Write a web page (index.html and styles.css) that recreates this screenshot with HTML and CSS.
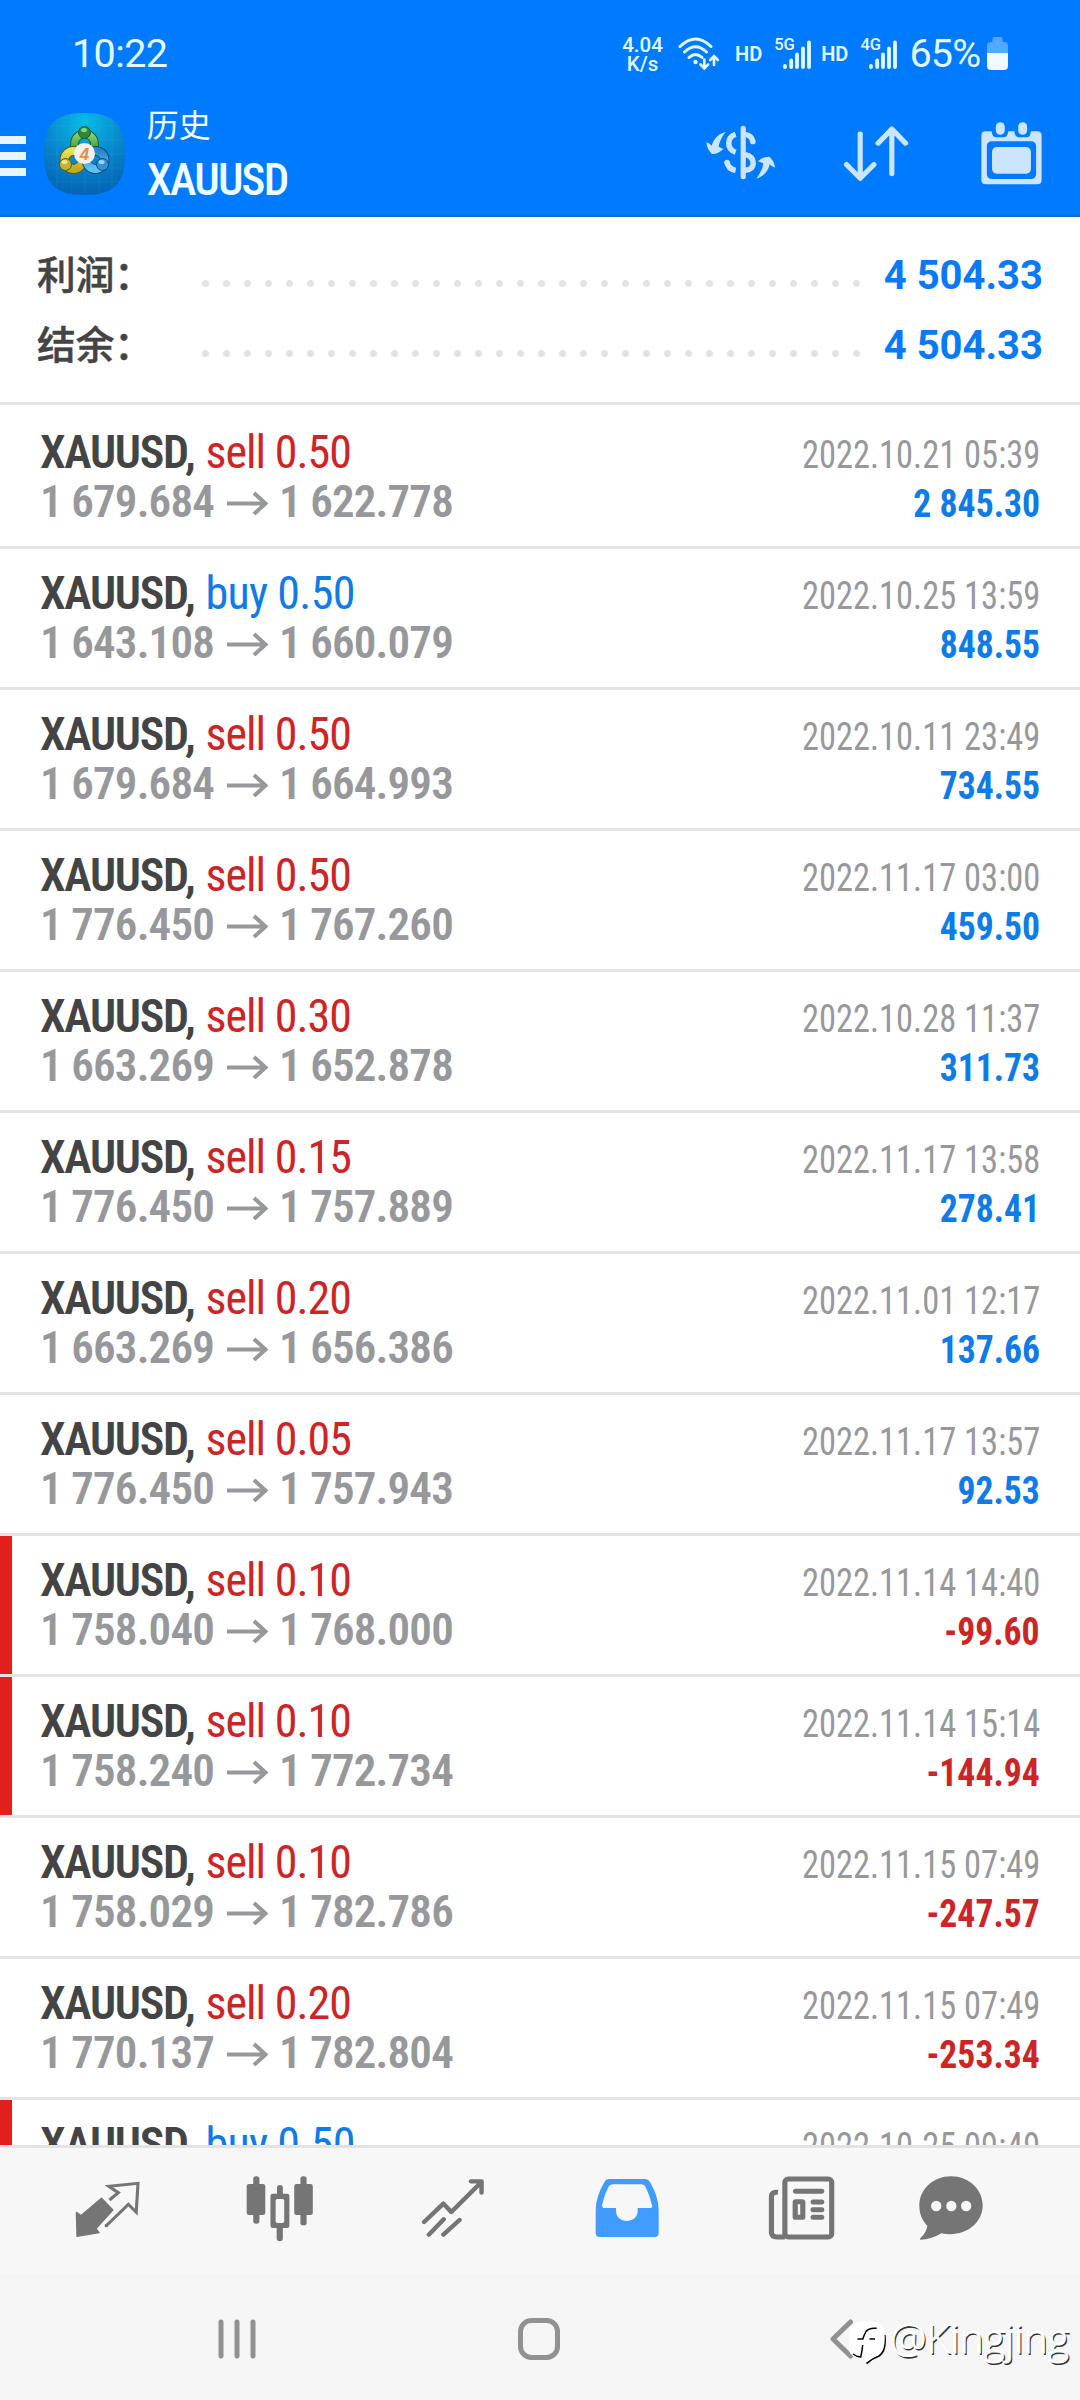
FILE: index.html
```html
<!DOCTYPE html>
<html lang="zh-CN">
<head>
<meta charset="utf-8">
<title>历史 XAUUSD</title>
<link rel="stylesheet" href="styles.css">
</head>
<body>
<div class="screen">
  <header class="header">
    <div class="status">
      <span class="clock">10:22</span>
      <div class="speed"><span>4.04</span><span>K/s</span></div>
      <svg class="wifi" viewBox="0 0 44 36" fill="none" stroke="#e0faff" stroke-width="3" stroke-linecap="round">
        <path d="M3 10.500Q18.500-4.500 34 10.500M7.500 16Q18.500 5.500 29.500 16M12 21.500Q18.500 15.500 25 21.500"/>
        <circle cx="18.500" cy="26" r="2.200" fill="#e0faff" stroke="none"/>
        <path stroke-width="2.600" d="M27.300 23.500V32M23.500 28.500L27.300 32.300L31.100 28.500M37 29V20.500M33.200 24L37 20.200L40.800 24"/>
      </svg>
      <span class="hd hd-a">HD</span>
      <div class="signal signal-a"><span>5G</span>
        <svg viewBox="0 0 30 30" stroke="#e0faff" stroke-width="3.800" stroke-linecap="round"><path d="M3 27V26M9.200 27V20.500M15 27V14.500M21 27V8.500M27 27V2.500"/></svg>
      </div>
      <span class="hd hd-b">HD</span>
      <div class="signal signal-b"><span>4G</span>
        <svg viewBox="0 0 30 30" stroke="#e0faff" stroke-width="3.800" stroke-linecap="round"><path d="M3 27V26M9.200 27V20.500M15 27V14.500M21 27V8.500M27 27V2.500"/></svg>
      </div>
      <span class="percent">65%</span>
      <svg class="battery" viewBox="0 0 21 33"><path fill="#55a8ff" d="M5.500 5V2q0-2 2-2h6q2 0 2 2v3h1.500q4 0 4 4v8H0V9q0-4 4-4z"/><path fill="#f2f9ff" d="M0 16h21v13q0 4-4 4H4q-4 0-4-4z"/></svg>
    </div>
    <div class="toolbar">
      <div class="menu"><i></i><i></i><i></i></div>
      <svg class="logo" viewBox="0 0 81 82">
        <defs>
          <radialGradient id="sky" cx=".5" cy=".1" r=".95"><stop offset="0" stop-color="#08bce8"/><stop offset=".5" stop-color="#0888cf"/><stop offset="1" stop-color="#035fb2"/></radialGradient>
          <linearGradient id="green" x2="0" y2="1"><stop offset="0" stop-color="#8fcf74"/><stop offset="1" stop-color="#1f8a2a"/></linearGradient>
          <linearGradient id="yellow" x2="0" y2="1"><stop offset="0" stop-color="#e9e25a"/><stop offset="1" stop-color="#c0aa20"/></linearGradient>
          <linearGradient id="blue" x2="0" y2="1"><stop offset="0" stop-color="#2b86c9"/><stop offset="1" stop-color="#5cc3f2"/></linearGradient>
        </defs>
        <path fill="url(#sky)" d="M40.500 0C70 0 81 11 81 41S70 82 40.500 82S0 71 0 41S11 0 40.500 0z"/>
        <path stroke="#4fc4f0" stroke-opacity=".13" fill="none" d="M13 5V76M27 1V81M41 0V82M55 1V81M68 5V77M5 13H76M1 27H80M0 41H81M1 55H80M5 69H76"/>
        <g fill="none">
          <circle cx="40.500" cy="31" r="10" stroke="#1d5a2c" stroke-width="9"/>
          <circle cx="40.500" cy="31" r="10" stroke="url(#green)" stroke-width="7"/>
          <circle cx="29.500" cy="47" r="9" stroke="#5b5c14" stroke-width="10"/>
          <circle cx="29.500" cy="47" r="9" stroke="url(#yellow)" stroke-width="8"/>
          <circle cx="51.500" cy="47" r="9" stroke="#0c4d83" stroke-width="10"/>
          <circle cx="51.500" cy="47" r="9" stroke="url(#blue)" stroke-width="8"/>
        </g>
        <circle cx="40.500" cy="19.500" r="6" fill="#2c8a36" stroke="#1d5a2c"/>
        <circle cx="21.500" cy="51.500" r="6" fill="#c3b332" stroke="#5b5c14"/>
        <circle cx="58.500" cy="51.500" r="6" fill="#3792d2" stroke="#0c4d83"/>
        <ellipse cx="40" cy="17" rx="3" ry="2" fill="#8fd08a"/><ellipse cx="20.500" cy="49" rx="3" ry="2" fill="#efe78c"/><ellipse cx="57.500" cy="49" rx="3" ry="2" fill="#9cd8f8"/>
        <circle cx="40.500" cy="40.500" r="10.500" fill="#f3f1ef"/>
        <text class="logo-digit" x="40.500" y="46.500" text-anchor="middle">4</text>
      </svg>
      <div class="titles"><span class="page">历史</span><span class="symbol">XAUUSD</span></div>
      <svg class="tool dollar" viewBox="480 375 202 165" preserveAspectRatio="none" fill="#cce5ff">
        <path d="M481 427Q490 429 496 437Q505 405 537 395Q518 422 517 440L530 447Q515 463 497 462Q483 448 481 427z"/>
        <path d="M680 503Q671 500 665 493Q658 525 626 536Q645 510 646 490L631 484Q646 469 664 470Q679 484 680 503z"/>
        <path fill="none" stroke="#cce5ff" stroke-width="15" stroke-linecap="round" d="M588 385V530"/>
        <path fill="none" stroke="#cce5ff" stroke-width="16" d="M566 403Q546 410 546 430Q546 450 566 457M592 403Q613 405 616 425M592 463Q617 468 617 490Q617 510 592 511M541 486Q544 507 566 511"/>
        <circle cx="616" cy="425" r="8"/><circle cx="541" cy="487" r="8"/>
      </svg>
      <svg class="tool sort" viewBox="880 374 192 172" preserveAspectRatio="none" fill="none" stroke="#cce5ff" stroke-width="15" stroke-linecap="round" stroke-linejoin="round"><path d="M930 401V534M890 493L930 535L970 493M1022 521V387M982 429L1022 386L1062 429"/></svg>
      <svg class="tool calendar" viewBox="1282 365 178 188" preserveAspectRatio="none" fill="#cce5ff">
        <path fill-rule="evenodd" d="M1296 393H1313Q1314 411 1327 411H1347Q1360 411 1361 393H1379Q1380 411 1393 411H1413Q1426 411 1427 393H1445Q1458 393 1458 406V539Q1458 552 1445 552H1296Q1283 552 1283 539V406Q1283 393 1296 393zM1315 423Q1299 423 1299 438V521Q1299 536 1315 536H1426Q1442 536 1442 521V438Q1442 423 1426 423z"/>
        <rect x="1314" y="440" width="113" height="80" rx="14"/>
        <rect x="1325" y="366" width="26" height="37" rx="13"/><rect x="1390" y="366" width="26" height="37" rx="13"/>
      </svg>
    </div>
  </header>

  <section class="summary">
    <div class="sum"><span class="label">利润：</span><span class="dots"></span><span class="total">4 504.33</span></div>
    <div class="sum"><span class="label">结余：</span><span class="dots"></span><span class="total">4 504.33</span></div>
  </section>

  <main class="deals" id="deals"></main>

  <nav class="tabs">
    <svg viewBox="218 285 190 205" preserveAspectRatio="none" width="65.400">
      <path fill="#757575" stroke="#757575" stroke-width="4" stroke-linejoin="round" d="M295 355L328 390L279 446L288 458L224 469L222 397L235 407z"/>
      <path fill="none" stroke="#757575" stroke-width="9" stroke-linejoin="miter" d="M318 360L344 338L316 319L401 310L396 397L373 373L308 438"/>
      <circle cx="309" cy="437" r="5" fill="#757575"/>
    </svg>
    <svg viewBox="715 285 196 205" preserveAspectRatio="none" width="67.500" fill="#757575">
      <rect x="717" y="312" width="54" height="93" rx="7"/><rect x="736" y="289" width="18" height="142" rx="8"/>
      <rect x="855" y="312" width="54" height="93" rx="7"/><rect x="873" y="289" width="18" height="147" rx="8"/>
      <path fill-rule="evenodd" d="M793 341H805V323Q805 315 813 315Q822 315 822 323V341H834Q841 341 841 348V437Q841 444 834 444H822V475Q822 484 813 484Q804 484 804 475V444H793Q786 444 786 437V348Q786 341 793 341zM806 357Q801 357 801 362V424Q801 429 806 429H821Q826 429 826 424V362Q826 357 821 357z"/>
    </svg>
    <svg viewBox="1223 285 186 205" preserveAspectRatio="none" width="64" fill="none" stroke="#757575" stroke-width="13" stroke-linecap="round" stroke-linejoin="round"><path d="M1232 426L1288 371L1311 396L1398 307M1368 304H1399V338M1246 464L1289 418M1288 464L1335 420"/></svg>
    <svg viewBox="160 285 187 205" preserveAspectRatio="none" width="64.400">
      <path fill="#419cff" fill-rule="evenodd" d="M202 297H304Q315 297 320 307Q345 351 345 390V459Q345 471 333 471H174Q162 471 162 459V390Q162 351 187 307Q192 297 202 297zM211 313Q203 313 199 321Q186 346 181 373Q179 384 187 384H221V392C221 433 284 433 284 392V384H320Q327 384 326 377Q320 348 307 321Q303 313 295 313z"/>
    </svg>
    <svg viewBox="662 285 196 205" preserveAspectRatio="none" width="67.500" fill="none" stroke="#757575" stroke-width="15">
      <rect x="711" y="297" width="136" height="174" rx="10"/>
      <path d="M691 337Q672 335 672 350V457Q672 471 688 471H711"/>
      <path stroke-linecap="round" d="M742 334H818M793 366H818M793 389H818M793 412H818"/>
      <rect x="741" y="365" width="22" height="47" rx="2"/>
    </svg>
    <svg viewBox="1100 285 187 205" preserveAspectRatio="none" width="64.400">
      <path fill="#757575" d="M1193 289C1244 289 1285 328 1285 376C1285 434 1228 474 1165 460Q1135 479 1104 479Q1100 477 1105 473Q1122 457 1124 437C1108 420 1101 401 1101 376C1101 328 1142 289 1193 289z"/>
      <g fill="#f7f7f7"><ellipse cx="1150" cy="378" rx="15" ry="16"/><ellipse cx="1194" cy="378" rx="15" ry="16"/><ellipse cx="1237" cy="378" rx="15" ry="16"/></g>
    </svg>
  </nav>
  <footer class="system">
    <svg class="recents" viewBox="0 0 38 42" stroke="#919191" stroke-width="5" stroke-linecap="round"><path d="M3 4V38M19 4V38M35 4V38"/></svg>
    <svg class="home" viewBox="0 0 42 42" fill="none" stroke="#919191" stroke-width="5"><rect x="2.500" y="2.500" width="37" height="37" rx="11"/></svg>
    <svg class="back" viewBox="0 0 24 42" fill="none" stroke="#919191" stroke-width="5" stroke-linecap="round" stroke-linejoin="round"><path d="M20.500 4L3 21L20.500 38"/></svg>
    <div class="mark">
      <svg viewBox="0 0 38 46"><path d="M36.700 14Q38.500 30 31 35Q24 37.500 18.500 42.500" fill="none" stroke="#000" stroke-width="1.800"/><path d="M10 1Q19-.5 29 1Q36 3 36.500 13Q38 29 30.500 34Q23 37 18 41.500Q16 38 18 34Q10 38 8 36Q1 34 1 28V13Q2 3 10 1z" fill="#fff"/><path d="M28.700 7.300Q21 6.500 18 10.500Q16 14 14.800 18H9.500M21.500 18H27M14.700 24Q14 31 12.700 36Q8 35.500 5 33" fill="none" stroke="#000" stroke-width="1.500"/></svg>
      <span>@Kingjing</span>
    </div>
  </footer>
</div>
<script src="deals.js"></script>
</body>
</html>
```
FILE: deals.js
```js
const deals = [
  ["sell 0.50", "1 679.684", "1 622.778", "2022.10.21 05:39", "2 845.30"],
  ["buy 0.50", "1 643.108", "1 660.079", "2022.10.25 13:59", "848.55"],
  ["sell 0.50", "1 679.684", "1 664.993", "2022.10.11 23:49", "734.55"],
  ["sell 0.50", "1 776.450", "1 767.260", "2022.11.17 03:00", "459.50"],
  ["sell 0.30", "1 663.269", "1 652.878", "2022.10.28 11:37", "311.73"],
  ["sell 0.15", "1 776.450", "1 757.889", "2022.11.17 13:58", "278.41"],
  ["sell 0.20", "1 663.269", "1 656.386", "2022.11.01 12:17", "137.66"],
  ["sell 0.05", "1 776.450", "1 757.943", "2022.11.17 13:57", "92.53"],
  ["sell 0.10", "1 758.040", "1 768.000", "2022.11.14 14:40", "-99.60", true],
  ["sell 0.10", "1 758.240", "1 772.734", "2022.11.14 15:14", "-144.94", true],
  ["sell 0.10", "1 758.029", "1 782.786", "2022.11.15 07:49", "-247.57"],
  ["sell 0.20", "1 770.137", "1 782.804", "2022.11.15 07:49", "-253.34"],
  ["buy 0.50", "", "", "2022.10.25 09:49", "", true]
];
const arrow = '<svg class="arrow" viewBox="0 0 42 24" fill="none" stroke="#97989c" stroke-width="4"><path d="M0 12.500H39M27 2L38.500 12.500L27 23"/></svg>';
const prices = (from, to, profit) => `
    <div class="line"><span class="price">${from}</span>${arrow}<span class="price">${to}</span><b class="profit ${profit[0] === "-" ? "loss" : "gain"}">${profit}</b></div>`;
document.getElementById("deals").innerHTML = deals.map(([side, from, to, time, profit, stopped]) => `
  <article class="deal${stopped ? " stopped" : ""}">
    <div class="line"><b class="name">XAUUSD,</b><span class="side ${side.split(" ")[0]}">${side}</span><span class="time">${time}</span></div>${from && prices(from, to, profit)}
  </article>`).join("");
```
FILE: styles.css
```css
* { box-sizing: border-box; }
body { margin: 0; background: #fff; font-family: Roboto, "Noto Sans CJK SC", sans-serif; }
svg { display: block; flex: none; }
.screen { width: 1080px; height: 2400px; display: flex; flex-direction: column; overflow: hidden; }

.header { height: 217px; flex: none; background: #007aff; border-bottom: 2px solid #1a6cc0; color: #e0faff; }
.status { height: 108px; display: flex; align-items: flex-start; padding-left: 72px; white-space: nowrap; }
.clock { width: 548px; font-size: 39.5px; line-height: 46px; letter-spacing: -.6px; margin-top: 31px; }
.speed { display: flex; flex-direction: column; align-items: center; width: 45px; margin-top: 36px; font-size: 20.5px; font-weight: 500; line-height: 19px; }
.wifi { width: 44px; height: 36px; margin: 36px 0 0 12px; }
.hd { font-size: 20px; font-weight: 600; line-height: 24px; margin-top: 42px; }
.hd-a { margin-left: 14px; }
.signal { display: grid; width: 38px; margin-top: 35px; font-size: 16.5px; font-weight: 500; line-height: 20px; }
.signal span { grid-area: 1 / 1; }
.signal svg { grid-area: 1 / 1; width: 30px; height: 30px; margin: 5px 0 0 8px; }
.signal-a { margin-left: 12px; }
.hd-b { margin-left: 9px; }
.signal-b { margin-left: 12px; }
.percent { width: 78px; margin: 31px 0 0 11px; font-size: 39.5px; line-height: 46px; letter-spacing: -.8px; }
.battery { width: 21px; height: 33px; margin-top: 37px; }

.toolbar { height: 107px; display: flex; align-items: flex-start; }
.menu { width: 26px; margin-top: 28px; display: grid; gap: 8.500px; flex: none; }
.menu i { height: 7.500px; background: #e6f5ff; }
.logo { width: 81px; height: 82px; margin: 5px 0 0 17.700px; }
.logo-digit { font: italic bold 17px "Liberation Sans", sans-serif; fill: #f08a34; }
.titles { width: 559px; margin-left: 22px; display: flex; flex-direction: column; color: #f0ffff; }
.page { font-size: 32px; line-height: 40px; margin-top: -2px; }
.symbol { font-family: "Roboto Condensed", Roboto, sans-serif; font-size: 45px; font-weight: 500; line-height: 54px; margin-top: 7px; letter-spacing: -1.800px; width: max-content; }
.dollar { width: 69.600px; height: 55px; margin-top: 17px; }
.sort { width: 66px; height: 57px; margin: 17px 0 0 68px; }
.calendar { width: 61.300px; height: 62.700px; margin: 14px 0 0 72px; }

.summary { height: 188px; flex: none; padding-top: 24px; border-bottom: 3px solid #e4e4e4; background: #fff; }
.sum { height: 70px; display: flex; align-items: center; padding: 0 37px; }
.label { width: 158px; margin-top: -9px; font: 500 38.700px/56px "Noto Sans CJK SC", sans-serif; -webkit-text-stroke: .5px #444; color: #444; }
.dots { width: 672px; height: 21px; margin-top: 15px; background: radial-gradient(circle, #e3e3e3 0 3px, transparent 4px) 0 0 / 21px 21px; }
.total { margin: -2px 0 0 auto; color: #087af5; font-size: 40px; font-weight: 700; }

.deals { flex: 1; min-height: 0; overflow: hidden; padding-top: 3px; font-family: "Roboto Condensed", Roboto, sans-serif; }
.deal { height: 141px; padding: 19px 40px 0; border-bottom: 3px solid #e4e4e4; }
.stopped { padding-left: 28px; border-left: 12px solid #e11f1f; border-bottom: 0; height: 138px; margin-bottom: 3px; box-shadow: 0 3px #e4e4e4; }
.line { display: flex; align-items: baseline; height: 50px; line-height: 50px; white-space: nowrap; }
.name { width: 165.500px; font-size: 46px; font-weight: 650; letter-spacing: -1.300px; color: #444; }
.side { font-size: 46px; letter-spacing: -1px; }
.sell { color: #cb2527; }
.buy { color: #0f7be6; letter-spacing: -.7px; }
.time { margin-left: auto; font-size: 38.500px; color: #98989b; transform: scaleX(.895); transform-origin: right; }
.price { font-size: 45px; font-weight: 650; letter-spacing: -.85px; color: #97989c; }
.arrow { width: 42px; height: 24px; margin: 14px 10px 0 13px; align-self: flex-start; }
.profit { margin-left: auto; font-size: 38px; transform: scaleX(.938); transform-origin: right; }
.gain { color: #0f7be6; }
.loss { color: #cb2527; }

.tabs { height: 129px; flex: none; background: #f7f7f7; border-top: 3px solid #e3e3e3; padding: 27px 0 0 21px; display: grid; grid-template-columns: 173.600px 171.200px 174.600px 173.600px 175px 125px; justify-items: center; }
.tabs svg { height: 68.300px; }
.system { height: 126px; flex: none; background: #f5f5f5; display: flex; padding: 44px 0 0 218px; position: relative; }
.recents { width: 38px; height: 42px; }
.home { width: 42px; height: 42px; margin-left: 262px; }
.back { width: 24px; height: 42px; margin-left: 270px; }
.mark { position: absolute; left: 848px; top: 47px; display: flex; color: #fff; }
.mark svg { width: 38px; height: 46px; }
.mark span { font: 300 41px/50px "Open Sans", sans-serif; margin: -9px 0 0 4px; -webkit-text-stroke: .8px #fff; text-shadow: 1.500px 1.500px 0 #333; }
```
